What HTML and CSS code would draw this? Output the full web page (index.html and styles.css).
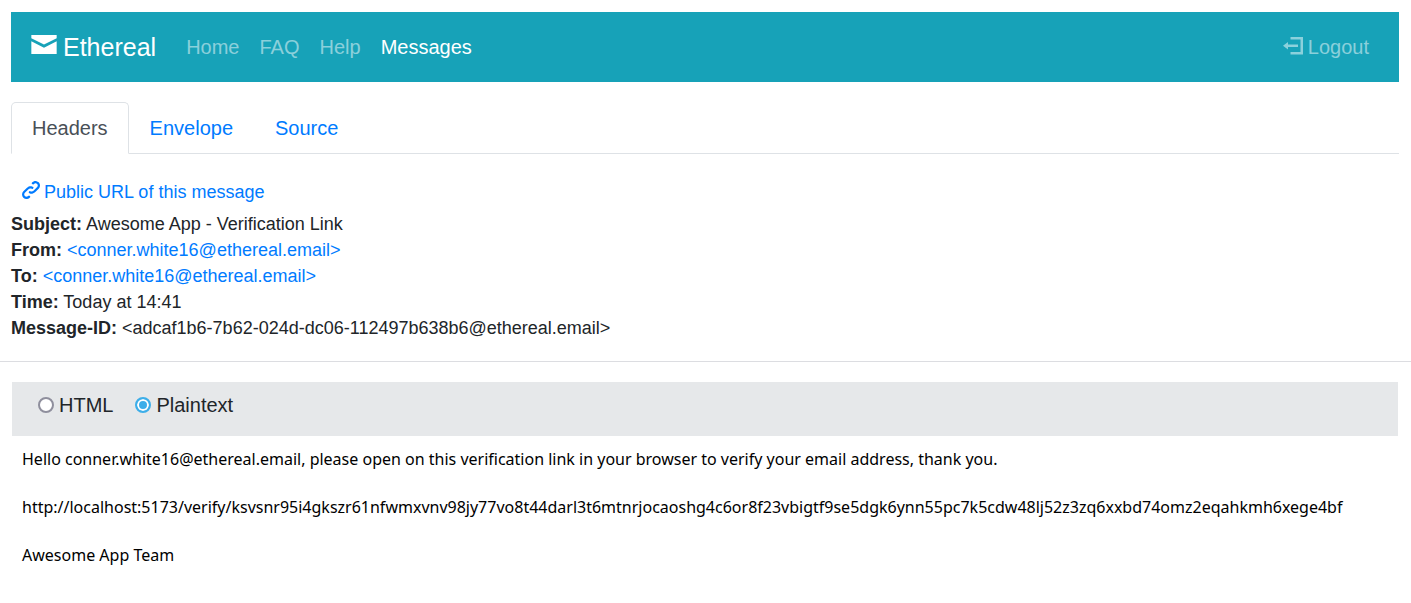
FILE: index.html
```html
<!DOCTYPE html>
<html lang="en">
<head>
<meta charset="utf-8">
<title>Ethereal - Messages</title>
<link rel="stylesheet" href="styles.css">
</head>
<body>
<div class="container">
  <nav class="navbar">
    <a class="brand" href="#"><svg class="icon brand-icon" viewBox="0 0 8 6" aria-hidden="true"><path d="M0 0v1l4 2 4-2v-1h-8zm0 2v4h8v-4l-4 2-4-2z"/></svg>Ethereal</a>
    <a class="nav-link" href="#">Home</a>
    <a class="nav-link" href="#">FAQ</a>
    <a class="nav-link" href="#">Help</a>
    <a class="nav-link active" href="#">Messages</a>
    <a class="nav-link logout" href="#"><svg class="icon logout-icon" viewBox="0 0 8 8" aria-hidden="true"><path d="M3 0v1h4v5h-4v1h5v-7h-5zm-1 2l-2 1.500 2 1.500v-1h4v-1h-4v-1z"/></svg>Logout</a>
  </nav>

  <div class="tabs">
    <a class="tab active" href="#">Headers</a>
    <a class="tab" href="#">Envelope</a>
    <a class="tab" href="#">Source</a>
  </div>

  <div class="headers">
    <a class="public-link" href="#"><svg class="icon link-icon" viewBox="0 0 8 8" aria-hidden="true"><path d="M5.880.03c-.18.01-.36.03-.53.09-.27.1-.53.25-.75.47a.5.5 0 1 0 .69.69c.11-.11.24-.17.38-.22.35-.12.78-.07 1.060.22.39.39.39 1.040 0 1.440l-1.500 1.500c-.44.44-.8.48-1.060.47-.26-.01-.41-.13-.41-.13a.5.5 0 1 0-.5.88s.34.22.84.25c.5.03 1.200-.16 1.810-.78l1.500-1.500c.78-.78.78-2.040 0-2.810-.28-.28-.61-.45-.97-.53-.18-.04-.38-.04-.56-.03zm-2 2.310c-.5-.02-1.190.15-1.780.75l-1.500 1.500c-.78.78-.78 2.040 0 2.810.56.56 1.360.72 2.060.47.27-.1.53-.25.75-.47a.5.5 0 1 0-.69-.69c-.11.11-.24.17-.38.22-.35.12-.78.07-1.060-.22-.39-.39-.39-1.040 0-1.440l1.500-1.500c.4-.4.75-.45 1.030-.44.28.01.47.09.47.09a.5.5 0 1 0 .44-.88s-.34-.2-.84-.22z"/></svg>Public URL of this message</a>
    <div><strong>Subject:</strong> Awesome App - Verification Link</div>
    <div><strong>From:</strong> <a href="#">&lt;conner.white16@ethereal.email&gt;</a></div>
    <div><strong>To:</strong> <a href="#">&lt;conner.white16@ethereal.email&gt;</a></div>
    <div><strong>Time:</strong> Today at 14:41</div>
    <div><strong>Message-ID:</strong> &lt;adcaf1b6-7b62-024d-dc06-112497b638b6@ethereal.email&gt;</div>
  </div>
</div>

<hr class="divider">

<main class="message">
  <form class="format-bar">
    <label class="format"><input class="radio" type="radio" name="format">HTML</label>
    <label class="format"><input class="radio" type="radio" name="format" checked>Plaintext</label>
  </form>
  <div class="plaintext">
    <p class="paragraph">Hello conner.white16@ethereal.email, please open on this verification link in your browser to verify your email address, thank you.</p>
    <p class="paragraph">http://localhost:5173/verify/ksvsnr95i4gkszr61nfwmxvnv98jy77vo8t44darl3t6mtnrjocaoshg4c6or8f23vbigtf9se5dgk6ynn55pc7k5cdw48lj52z3zq6xxbd74omz2eqahkmh6xege4bf</p>
    <p class="paragraph">Awesome App Team</p>
  </div>
</main>
</body>
</html>
```
FILE: styles.css
```css
* {
  box-sizing: border-box;
}

body {
  margin: 0;
  background: #fff;
  color: #212529;
  font: 20px/30px "Liberation Sans", Arial, sans-serif;
}

a {
  color: #007bff;
  text-decoration: none;
}

.container {
  padding: 12px 12px 0 11px;
}

.icon {
  fill: currentColor;
}

.navbar {
  display: flex;
  align-items: center;
  height: 70px;
  padding: 0 20px;
  background: #17a2b8;
}

.brand {
  margin-right: 20px;
  color: #fff;
  font-size: 25px;
}

.brand-icon {
  width: 26px;
  height: 19px;
  margin-right: 6px;
  vertical-align: 2px;
}

.nav-link {
  padding: 0 10px;
  color: rgba(255, 255, 255, 0.5);
}

.nav-link.active {
  color: #fff;
}

.logout {
  margin-left: auto;
}

.logout-icon {
  width: 20px;
  height: 20px;
  margin-right: 5px;
  vertical-align: -3px;
}

.tabs {
  display: flex;
  margin-top: 20px;
  border-bottom: 1px solid #dee2e6;
}

.tab {
  margin-bottom: -1px;
  padding: 10px 20px;
  border: 1px solid transparent;
  border-radius: 5px 5px 0 0;
}

.tab.active {
  border-color: #dee2e6 #dee2e6 #fff;
  background: #fff;
  color: #495057;
}

.headers {
  padding-top: 25px;
  font-size: 18px;
  line-height: 26px;
}

.public-link {
  display: block;
  margin-bottom: 6px;
  padding-left: 11px;
}

.link-icon {
  width: 18px;
  height: 18px;
  margin-right: 4px;
  vertical-align: -1px;
}

.divider {
  margin: 20px 0;
  border: 0;
  border-top: 1px solid #dcdde1;
}

.message {
  margin: 0 13px 0 12px;
}

.format-bar {
  display: flex;
  gap: 22px;
  padding: 8px 26px 16px;
  background: #e6e8ea;
}

.format {
  display: flex;
  align-items: center;
  gap: 5px;
}

.radio {
  appearance: none;
  width: 16px;
  height: 16px;
  margin: 0;
  border: 2px solid #8f8f9d;
  border-radius: 50%;
  background: #fff;
}

.radio:checked {
  border-color: #3daee9;
  background: #3daee9;
  box-shadow: inset 0 0 0 2px #fff;
}

.plaintext {
  padding: 11px 10px;
  color: #000;
  font: 16px/24px "Noto Sans", sans-serif;
}

.paragraph {
  margin: 0 0 24px;
  overflow-wrap: anywhere;
}
```
